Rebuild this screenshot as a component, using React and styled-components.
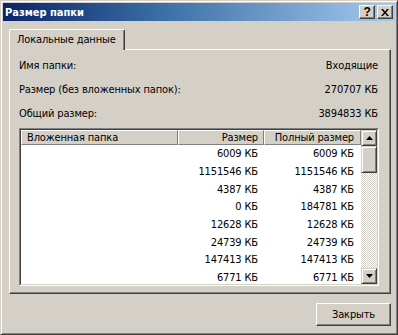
import React from "react";
import styled, { createGlobalStyle } from "styled-components";

const Global = createGlobalStyle`
  html, body { margin: 0; padding: 0; background: #d4d0c8; }
  body { font-family: "DejaVu Sans Condensed", "DejaVu Sans", sans-serif; font-size: 11px; letter-spacing: -0.15px; color: #000; }
`;

const FACE = "#d4d0c8";

const Window = styled.div`
  box-sizing: border-box;
  width: 398px;
  height: 335px;
  background: ${FACE};
  border: 1px solid;
  border-color: ${FACE} #404040 #404040 ${FACE};
  box-shadow: inset 1px 1px #fff, inset -1px -1px #808080;
  padding: 2px;
  display: flex;
  flex-direction: column;
`;

const TitleBar = styled.div`
  height: 18px;
  display: flex;
  align-items: center;
  padding: 0 2px 0 2px;
  background: linear-gradient(to right, #0a246a, #3a6ea5 40%, #a6caf0);
`;

const Title = styled.div`
  flex: 1;
  color: #fff;
  font-weight: bold;
  font-size: 11px;
  letter-spacing: 0;
`;

const CapButton = styled.div`
  box-sizing: border-box;
  width: 16px;
  height: 14px;
  margin-left: ${(p) => (p.$gap ? "2px" : "0")};
  background: ${FACE};
  border: 1px solid;
  border-color: #fff #404040 #404040 #fff;
  box-shadow: inset -1px -1px #808080;
  display: flex;
  align-items: center;
  justify-content: center;
  font-family: "Liberation Sans", Arial, sans-serif;
  font-weight: bold;
  font-size: 12px;
  line-height: 1;
  color: #000;
`;

const Body = styled.div`
  flex: 1;
  display: flex;
  flex-direction: column;
  padding: 8px 4px 0 6px;
`;

const TabStrip = styled.div`
  display: flex;
  height: 20px;
`;

const Tab = styled.div`
  box-sizing: border-box;
  height: 21px;
  margin-bottom: -1px;
  padding: 3px 8px 0 7px;
  background: ${FACE};
  border-left: 1px solid #fff;
  border-top: 1px solid #fff;
  border-right: 1px solid #404040;
  border-radius: 2px 2px 0 0;
  box-shadow: inset -1px 0 #808080;
  position: relative;
  z-index: 1;
`;

const Panel = styled.div`
  box-sizing: border-box;
  height: 245px;
  border: 1px solid;
  border-color: #fff #404040 #404040 #fff;
  box-shadow: inset -1px -1px #808080;
  padding: 3px 9px 0 9px;
  display: flex;
  flex-direction: column;
`;

const InfoRow = styled.div`
  height: 24px;
  display: flex;
  align-items: center;
  justify-content: space-between;
  padding-right: 3px;
`;

const ListBox = styled.div`
  margin-top: 3px;
  box-sizing: border-box;
  height: 158px;
  width: 360px;
  border: 1px solid;
  border-color: #808080 #fff #fff #808080;
  display: flex;
`;

const ListInner = styled.div`
  flex: 1;
  border: 1px solid;
  border-color: #404040 ${FACE} ${FACE} #404040;
  background: #fff;
  display: flex;
  overflow: hidden;
`;

const Table = styled.div`
  width: 340px;
  display: flex;
  flex-direction: column;
`;

const cols = "157px 86px 97px";

const HeaderRow = styled.div`
  display: grid;
  grid-template-columns: ${cols};
  height: 17px;
`;

const HeaderCell = styled.div`
  box-sizing: border-box;
  background: ${FACE};
  border: 1px solid;
  border-color: #fff #808080 #808080 #fff;
  display: flex;
  align-items: center;
  justify-content: ${(p) => (p.$right ? "flex-end" : "flex-start")};
  padding-left: ${(p) => (p.$right ? "0" : "5px")};
  padding-right: ${(p) => p.$pr || "0"};
  white-space: nowrap;
`;

const Rows = styled.div`
  display: flex;
  flex-direction: column;
`;

const Row = styled.div`
  display: grid;
  grid-template-columns: ${cols};
  height: 17.7px;
  align-items: center;
`;

const Cell = styled.div`
  text-align: right;
  padding-right: ${(p) => p.$pr};
  white-space: nowrap;
`;

const ScrollBar = styled.div`
  width: 16px;
  display: flex;
  flex-direction: column;
  background-color: #fff;
  background-image: repeating-conic-gradient(${FACE} 0 25%, #fff 0 50%);
  background-size: 2px 2px;
`;

const ScrollBtn = styled.div`
  box-sizing: border-box;
  width: 16px;
  height: ${(p) => p.$h || "16px"};
  background: ${FACE};
  border: 1px solid;
  border-color: ${FACE} #404040 #404040 ${FACE};
  box-shadow: inset 1px 1px #fff, inset -1px -1px #808080;
  display: flex;
  align-items: center;
  justify-content: center;
`;

const Track = styled.div`
  flex: 1;
`;

const Footer = styled.div`
  display: flex;
  justify-content: flex-end;
  padding-top: 9px;
`;

const Button = styled.div`
  box-sizing: border-box;
  width: 75px;
  height: 23px;
  background: ${FACE};
  border: 1px solid;
  border-color: #fff #404040 #404040 #fff;
  box-shadow: inset -1px -1px #808080;
  display: flex;
  align-items: center;
  justify-content: center;
`;

const Arrow = ({ up }) => (
  <svg width="7" height="4" viewBox="0 0 7 4">
    <path d={up ? "M3.5 0 L7 4 L0 4 Z" : "M0 0 L7 0 L3.5 4 Z"} fill="#000" />
  </svg>
);

const rows = [
  ["6009 КБ", "6009 КБ"],
  ["1151546 КБ", "1151546 КБ"],
  ["4387 КБ", "4387 КБ"],
  ["0 КБ", "184781 КБ"],
  ["12628 КБ", "12628 КБ"],
  ["24739 КБ", "24739 КБ"],
  ["147413 КБ", "147413 КБ"],
  ["6771 КБ", "6771 КБ"],
];

export default function App() {
  return (
    <>
      <Global />
      <Window>
        <TitleBar>
          <Title>Размер папки</Title>
          <CapButton>?</CapButton>
          <CapButton $gap>
            <svg width="8" height="7" viewBox="0 0 8 7">
              <path d="M0 0 L2 0 L4 2.5 L6 0 L8 0 L5 3.5 L8 7 L6 7 L4 4.5 L2 7 L0 7 L3 3.5 Z" fill="#000" />
            </svg>
          </CapButton>
        </TitleBar>
        <Body>
          <TabStrip>
            <Tab>Локальные данные</Tab>
          </TabStrip>
          <Panel>
            <InfoRow>
              <span>Имя папки:</span>
              <span>Входящие</span>
            </InfoRow>
            <InfoRow>
              <span>Размер (без вложенных папок):</span>
              <span>270707 КБ</span>
            </InfoRow>
            <InfoRow>
              <span>Общий размер:</span>
              <span>3894833 КБ</span>
            </InfoRow>
            <ListBox>
              <ListInner>
                <Table>
                  <HeaderRow>
                    <HeaderCell>Вложенная папка</HeaderCell>
                    <HeaderCell $right $pr="5px">Размер</HeaderCell>
                    <HeaderCell $right $pr="6px">Полный размер</HeaderCell>
                  </HeaderRow>
                  <Rows>
                    {rows.map(([a, b], i) => (
                      <Row key={i}>
                        <Cell />
                        <Cell $pr="6px">{a}</Cell>
                        <Cell $pr="7px">{b}</Cell>
                      </Row>
                    ))}
                  </Rows>
                </Table>
                <ScrollBar>
                  <ScrollBtn>
                    <Arrow up />
                  </ScrollBtn>
                  <ScrollBtn $h="27px" />
                  <Track />
                  <ScrollBtn>
                    <Arrow />
                  </ScrollBtn>
                </ScrollBar>
              </ListInner>
            </ListBox>
          </Panel>
          <Footer>
            <Button>Закрыть</Button>
          </Footer>
        </Body>
      </Window>
    </>
  );
}
